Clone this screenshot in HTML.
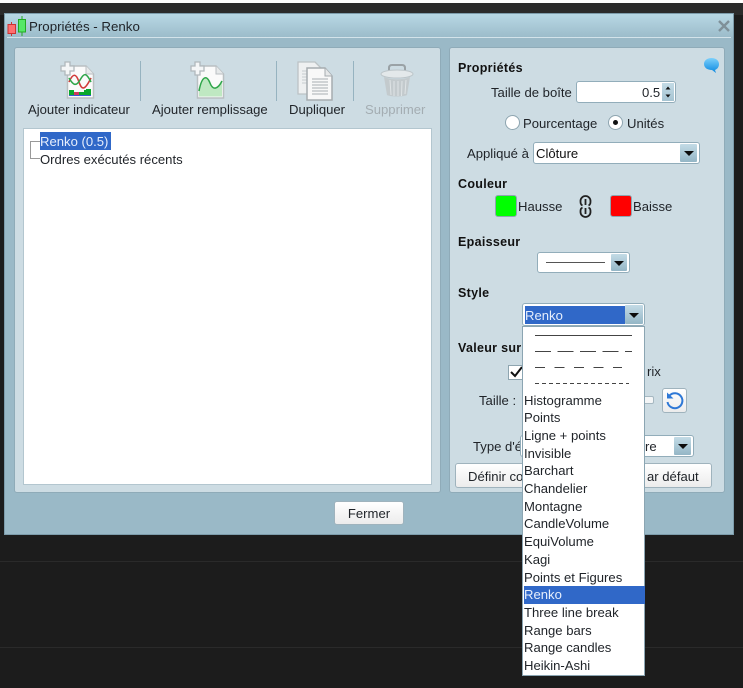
<!DOCTYPE html>
<html><head><meta charset="utf-8"><style>
html,body{margin:0;padding:0}
body{width:743px;height:688px;overflow:hidden;position:relative;background:#1c1c1c;font-family:"Liberation Sans",sans-serif;font-size:13.1px;color:#1f2328}
.a{position:absolute}
.t{position:absolute;white-space:nowrap;line-height:18px;height:16px}
.b{font-weight:bold;font-size:12.5px;letter-spacing:.3px;color:#111}
.panel{position:absolute;background:#cddce3;border:1px solid #8fabb8;border-radius:3px;box-sizing:border-box}
.btn{position:absolute;box-sizing:border-box;border:1px solid #9fb3bd;border-radius:3px;background:linear-gradient(#fff,#ececec);text-align:center;line-height:21px}
.combo{position:absolute;box-sizing:border-box;border:1px solid #92adba;border-radius:3px;background:#fff}
.arr{position:absolute;background:linear-gradient(#c3dbe6,#94b6c6);border-radius:1px}
.arr:after{content:"";position:absolute;left:50%;top:50%;margin:-2px 0 0 -5px;border:5px solid transparent;border-top:5px solid #0c0c0c;border-bottom:0}
.sep{position:absolute;width:1px;background:#96b3c0;top:61px;height:40px}
.it{position:absolute;left:1px;width:121px;height:17.7px;line-height:18.4px;padding-left:0;box-sizing:border-box;white-space:nowrap}
.ln{position:absolute;left:12px;width:97px;height:1px}
</style></head><body>
<div class="a" style="left:0;top:0;width:743px;height:3px;background:#fff"></div>
<div class="a" style="left:0;top:3px;width:743px;height:12px;background:#2b2b2b"></div>
<div class="a" style="left:0;top:561px;width:743px;height:1px;background:#2a2a2a"></div>
<div class="a" style="left:0;top:647px;width:743px;height:1px;background:#2a2a2a"></div>

<div class="a" style="left:4px;top:13px;width:730px;height:522px;background:#9ab9c7;border:1px solid #7d9cab;box-sizing:border-box"></div>
<div class="a" style="left:5px;top:14px;width:728px;height:23px;background:linear-gradient(#b8d8e5,#9cbcca)"></div>
<div class="a" style="left:7px;top:37px;width:724px;height:1px;background:#d3e3ea"></div>

<svg class="a" style="left:7px;top:15px" width="22" height="22" viewBox="0 0 22 22">
<path d="M4.500 7v14" stroke="#c33" fill="none"/><rect x="1" y="9.500" width="7.500" height="9" fill="#ff6f6f" stroke="#c33"/>
<path d="M15 1v20" stroke="#2a2" fill="none"/><rect x="11.500" y="4.500" width="7" height="12.500" fill="#55e868" stroke="#2a2"/></svg>
<div class="t" style="left:29px;top:18px;font-size:13.3px">Propriétés - Renko</div>
<svg class="a" style="left:718px;top:20px" width="12" height="12" viewBox="0 0 12 12"><path d="M1 1l10 10M11 1L1 11" stroke="#7f9099" stroke-width="2.400"/></svg>

<div class="panel" style="left:14px;top:47px;width:427px;height:446px"></div>
<div class="panel" style="left:449px;top:47px;width:276px;height:446px"></div>

<!-- toolbar icons -->
<svg class="a" style="left:60px;top:61px" width="36" height="38" viewBox="0 0 36 38">
<path d="M7.500 5H26l7.500 8v24H7.500z" fill="#fafafa" stroke="#b9bfc2" stroke-width="1.500"/><path d="M26 5v8h7.500" fill="#e6e9ea" stroke="#b9bfc2"/>
<path d="M9 21c4-9 7-9 10 0s6 8 12-4" fill="none" stroke="#d23a3a" stroke-width="1.600"/>
<path d="M9 17c4 7 7 9 11 2s6-8 11 2" fill="none" stroke="#2fa64a" stroke-width="1.600"/>
<rect x="9" y="29" width="5" height="5" fill="#0aa82c"/><rect x="14" y="31" width="5" height="3" fill="#d23a5a"/><rect x="19" y="31" width="5" height="3" fill="#0aa82c"/><rect x="24" y="29" width="2" height="5" fill="#0aa82c"/><rect x="26" y="28" width="5" height="6" fill="#0aa82c"/><path d="M9 34.500h22" stroke="#3a5ad0"/>
<path d="M5 1h5v4h4v5h-4v4H5v-4H1V5h4z" fill="#f4f6f7" stroke="#b0b8bc" stroke-width="1.300"/></svg>
<svg class="a" style="left:190px;top:61px" width="36" height="38" viewBox="0 0 36 38">
<path d="M7.500 5H26l7.500 8v24H7.500z" fill="#fafafa" stroke="#b9bfc2" stroke-width="1.500"/><path d="M26 5v8h7.500" fill="#e6e9ea" stroke="#b9bfc2"/>
<path d="M9 30c3-16 8-16 11-8s8 6 12-2v15.500H9z" fill="#bfe8c2"/><path d="M9 30c3-16 8-16 11-8s8 6 12-2" fill="none" stroke="#2fa64a" stroke-width="1.500"/>
<path d="M5 1h5v4h4v5h-4v4H5v-4H1V5h4z" fill="#f4f6f7" stroke="#b0b8bc" stroke-width="1.300"/></svg>
<svg class="a" style="left:297px;top:61px" width="40" height="40" viewBox="0 0 40 40">
<path d="M1 1h17l8 8v24H1z" fill="#eef0f1" stroke="#bcc2c5" stroke-width="1.300"/>
<path d="M5 10h9M5 13h15M5 16h15M5 19h15M5 22h15" stroke="#c6cbce"/>
<path d="M10 7h18l7 8v24H10z" fill="#f8f8f8" stroke="#a6acb0" stroke-width="1.500"/><path d="M28 7v8h7" fill="#e6e8e9" stroke="#a6acb0"/>
<path d="M15 18h16M15 21h16M15 24h16M15 27h16M15 30h16M15 33h16" stroke="#a9aeb2"/></svg>
<svg class="a" style="left:379px;top:63px" width="36" height="36" viewBox="0 0 36 36">
<path d="M10 10V5c0-2 1-3 3-3h10c2 0 3 1 3 3v5" fill="none" stroke="#9aa2a6" stroke-width="2"/>
<ellipse cx="18" cy="11" rx="16" ry="4" fill="#e3e8ea" stroke="#bcc5c9"/>
<path d="M5 14c8 3 18 3 26 0l-3 18c-3 2-17 2-20 0z" fill="#c3cacd"/>
<path d="M11 17l1 15M15 18v15M19 18v15M23 18l-.5 15M27 17l-1 14" stroke="#dfe4e6"/></svg>

<div class="sep" style="left:140px"></div><div class="sep" style="left:276px"></div><div class="sep" style="left:353px"></div>

<div class="t" style="left:28px;top:101px">Ajouter indicateur</div>
<div class="t" style="left:152px;top:101px">Ajouter remplissage</div>
<div class="t" style="left:289px;top:101px">Dupliquer</div>
<div class="t" style="left:365px;top:101px;color:#a4adb2">Supprimer</div>

<!-- tree -->
<div class="a" style="left:23px;top:128px;width:409px;height:357px;background:#fff;border:1px solid #b3c6cf;box-sizing:border-box"></div>
<div class="a" style="left:30px;top:141px;width:10px;height:18px;border:1px solid #999;border-right:0;box-sizing:border-box"></div>
<div class="a" style="left:40px;top:132px;width:71px;height:18px;background:#3068c8"></div>
<div class="t" style="left:40px;top:133px;color:#e6eefc">Renko (0.5)</div>
<div class="t" style="left:40px;top:151px">Ordres exécutés récents</div>

<!-- right panel -->
<div class="t b" style="left:458px;top:59px">Propriétés</div>
<svg class="a" style="left:703px;top:57px" width="17" height="17" viewBox="0 0 17 17"><defs><linearGradient id="g" x1="0" y1="0" x2="0" y2="1"><stop offset="0" stop-color="#7cd0fb"/><stop offset="1" stop-color="#0a88e0"/></linearGradient></defs><path d="M8.500 1C13 1 16 3.500 16 7s-2 5-4 6l1 3-4-3C4 13 1 10.500 1 7s3-6 7.500-6z" fill="url(#g)"/></svg>

<div class="t" style="left:491px;top:84px">Taille de boîte</div>
<div class="combo" style="left:576px;top:81px;width:100px;height:22px"></div>
<div class="t" style="left:642px;top:84px">0.5</div>
<div class="a" style="left:662px;top:83px;width:12px;height:18px;background:linear-gradient(#c3dbe6,#a6c4d2)"></div>
<svg class="a" style="left:662px;top:83px" width="12" height="18" viewBox="0 0 12 18"><path d="M3.500 6.500l2.500-3 2.500 3zM3.500 11.500l2.500 3 2.500-3z" fill="#111"/></svg>

<div class="a" style="left:505px;top:115px;width:15px;height:15px;border-radius:50%;background:#fff;border:1px solid #8ea5b0;box-sizing:border-box"></div>
<div class="t" style="left:523px;top:115px">Pourcentage</div>
<div class="a" style="left:608px;top:115px;width:15px;height:15px;border-radius:50%;background:#fff;border:1px solid #8ea5b0;box-sizing:border-box"></div>
<div class="a" style="left:613px;top:120px;width:5px;height:5px;border-radius:50%;background:#111"></div>
<div class="t" style="left:627px;top:115px">Unités</div>

<div class="t" style="left:467px;top:145px">Appliqué à</div>
<div class="combo" style="left:533px;top:142px;width:167px;height:22px"></div>
<div class="t" style="left:536px;top:145px;color:#111">Clôture</div>
<div class="arr" style="left:680px;top:144px;width:17px;height:18px"></div>

<div class="t b" style="left:458px;top:175px">Couleur</div>
<div class="a" style="left:495px;top:195px;width:22px;height:22px;background:#0f0;border:1px solid #8ea5b0;border-radius:3px;box-sizing:border-box"></div>
<div class="t" style="left:518px;top:198px">Hausse</div>
<svg class="a" style="left:579px;top:195px" width="13" height="23" viewBox="0 0 13 23"><path d="M3.500 10.500C1.500 9.500 1.500 8 1.500 6a5 5 0 0 1 10 0c0 2 0 3.500-2 4.500M6.500 4v6M3.500 12.500C1.500 13.500 1.500 15 1.500 17a5 5 0 0 0 10 0c0-2 0-3.500-2-4.500M6.500 13v6" fill="none" stroke="#222" stroke-width="1.800"/></svg>
<div class="a" style="left:610px;top:195px;width:22px;height:22px;background:#f00;border:1px solid #8ea5b0;border-radius:3px;box-sizing:border-box"></div>
<div class="t" style="left:633px;top:198px">Baisse</div>

<div class="t b" style="left:458px;top:233px">Epaisseur</div>
<div class="combo" style="left:537px;top:252px;width:93px;height:21px"></div>
<div class="a" style="left:546px;top:262px;width:59px;height:1px;background:#555"></div>
<div class="arr" style="left:611px;top:254px;width:16px;height:17px"></div>

<div class="t b" style="left:458px;top:284px">Style</div>
<div class="combo" style="left:522px;top:303px;width:123px;height:23px"></div>
<div class="a" style="left:525px;top:306px;width:100px;height:18px;background:#3068c8"></div>
<div class="t" style="left:525px;top:307px;color:#e6eefc">Renko</div>
<div class="arr" style="left:625px;top:305px;width:18px;height:19px"></div>

<div class="t b" style="left:458px;top:339px">Valeur sur</div>
<div class="a" style="left:508px;top:365px;width:16px;height:15px;background:#fff;border:1px solid #8ea5b0;box-sizing:border-box"></div>
<svg class="a" style="left:510px;top:366px" width="14" height="12" viewBox="0 0 14 12"><path d="M1 6l4 4 7-9" fill="none" stroke="#111" stroke-width="2"/></svg>
<div class="t" style="left:647px;top:363px">rix</div>
<div class="t" style="left:479px;top:392px">Taille :</div>
<div class="a" style="left:640px;top:396px;width:14px;height:8px;background:#f4f6f7;border:1px solid #a6b8c1;border-radius:2px;box-sizing:border-box"></div>
<div class="btn" style="left:662px;top:388px;width:25px;height:25px"></div>
<svg class="a" style="left:664px;top:390px" width="21" height="21" viewBox="0 0 21 21"><path d="M5.500 5.500A7.500 7.500 0 1 1 3.500 12" fill="none" stroke="#2e78d6" stroke-width="2"/><path d="M3 2.500v6h6.500z" fill="#2e78d6"/></svg>
<div class="t" style="left:473px;top:438px">Type d'é</div>
<div class="combo" style="left:520px;top:435px;width:174px;height:22px"></div>
<div class="t" style="left:645px;top:438px">re</div>
<div class="arr" style="left:674px;top:437px;width:17px;height:18px"></div>
<div class="btn" style="left:455px;top:463px;width:257px;height:25px"></div>
<div class="t" style="left:468px;top:468px">Définir co</div>
<div class="t" style="left:647px;top:468px">ar défaut</div>

<div class="btn" style="left:334px;top:501px;width:70px;height:24px;line-height:24px">Fermer</div>

<!-- dropdown -->
<div class="a" style="left:522px;top:326px;width:123px;height:350px;background:#fff;border:1px solid #8ba5b2;box-sizing:border-box">
<div class="ln" style="top:8px;background:#444"></div>
<div class="ln" style="top:24px;background:repeating-linear-gradient(90deg,#444 0 16px,transparent 16px 22.500px)"></div>
<div class="ln" style="top:40px;background:repeating-linear-gradient(90deg,#444 0 10px,transparent 10px 19.500px);width:87px"></div>
<div class="ln" style="top:56px;background:repeating-linear-gradient(90deg,#444 0 4px,transparent 4px 7px);width:94px"></div>
<div class="it" style="top:64.500px">Histogramme</div>
<div class="it" style="top:82.200px">Points</div>
<div class="it" style="top:99.900px">Ligne + points</div>
<div class="it" style="top:117.600px">Invisible</div>
<div class="it" style="top:135.300px">Barchart</div>
<div class="it" style="top:153px">Chandelier</div>
<div class="it" style="top:170.700px">Montagne</div>
<div class="it" style="top:188.400px">CandleVolume</div>
<div class="it" style="top:206.100px">EquiVolume</div>
<div class="it" style="top:223.800px">Kagi</div>
<div class="it" style="top:241.500px">Points et Figures</div>
<div class="it" style="top:259.200px;background:#3068c8;color:#e6eefc">Renko</div>
<div class="it" style="top:276.900px">Three line break</div>
<div class="it" style="top:294.600px">Range bars</div>
<div class="it" style="top:312.300px">Range candles</div>
<div class="it" style="top:330px">Heikin-Ashi</div>
</div>
</body></html>
